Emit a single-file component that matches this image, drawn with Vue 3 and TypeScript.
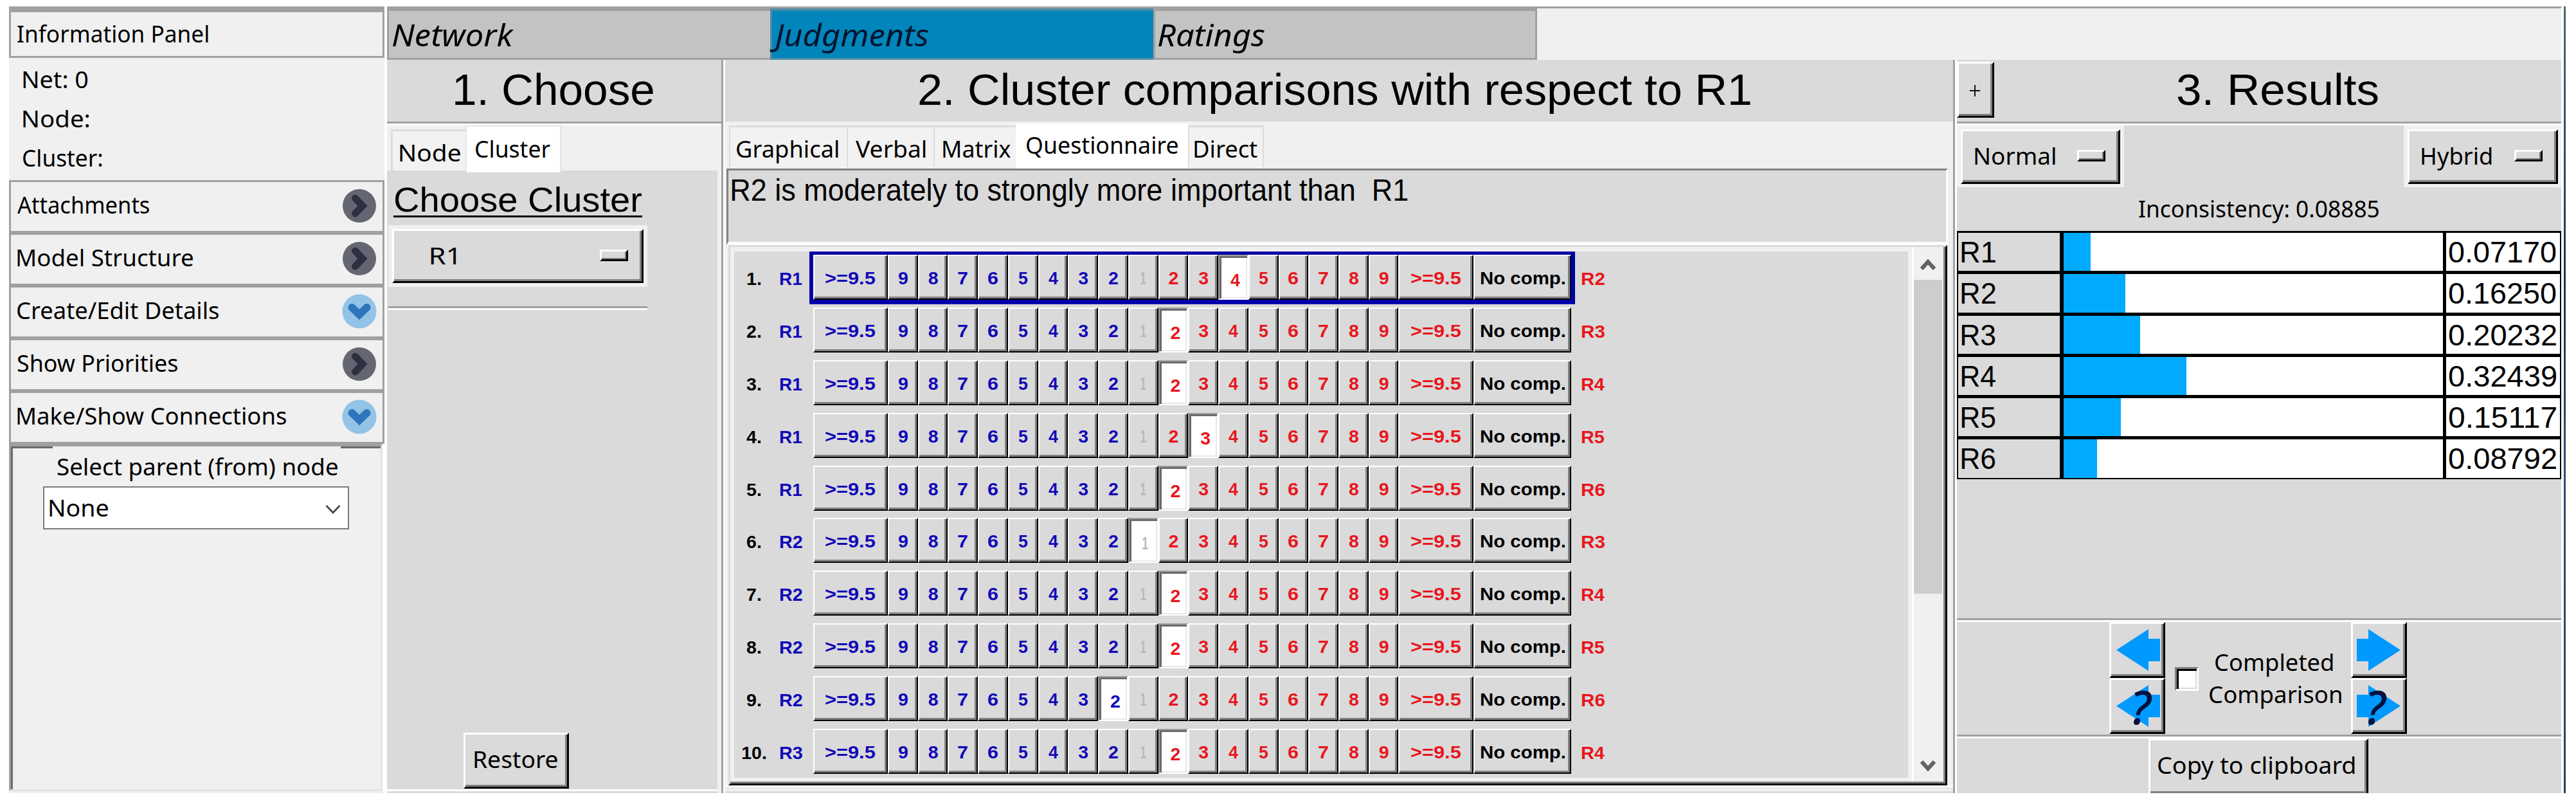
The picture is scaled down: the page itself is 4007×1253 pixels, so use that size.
<script setup lang="ts">
interface Fit extends HTMLElement {}

// Stretches a label horizontally so that its ink spans exactly the given width.
const vFit = {
  mounted(el: Fit, binding: { value: number }) {
    const cs = getComputedStyle(el)
    const ctx = document.createElement('canvas').getContext('2d')
    if (!ctx) return
    ctx.font = `${cs.fontStyle} ${cs.fontWeight} ${cs.fontSize} ${cs.fontFamily}`
    const m = ctx.measureText(el.textContent || '')
    const left = -m.actualBoundingBoxLeft
    const ink = m.actualBoundingBoxRight - left
    const k = binding.value / ink
    el.style.transform = `translateX(${-(left * k)}px) scaleX(${k})`
    el.style.marginRight = `${binding.value - el.offsetWidth}px`
  },
}

const topTabs = [
  { label: 'Network', w: 190, pad: 5, on: false },
  { label: 'Judgments', w: 247, pad: -4, on: true },
  { label: 'Ratings', w: 166, pad: 4, on: false },
]

const drawers = [
  { label: 'Attachments', w: 205, open: false },
  { label: 'Model Structure', w: 273, open: false },
  { label: 'Create/Edit Details', w: 313, open: true },
  { label: 'Show Priorities', w: 249, open: false },
  { label: 'Make/Show Connections', w: 418, open: true },
]

const facts = [
  { label: 'Net: 0', w: 101 },
  { label: 'Node:', w: 103 },
  { label: 'Cluster:', w: 123 },
]

const modes = [
  { label: 'Graphical', w: 158, cell: 183, pad: 10, on: false },
  { label: 'Verbal', w: 109, cell: 135, pad: 12, on: false },
  { label: 'Matrix', w: 105, cell: 128, pad: 13, on: false },
  { label: 'Questionnaire', w: 235, cell: 268, pad: 15, on: true },
  { label: 'Direct', w: 98, cell: 118, pad: 8, on: false },
]

type Side = 'blue' | 'mid' | 'red' | 'none'
interface Cell { label: string; side: Side; w: number }

const scale: Cell[] = [
  { label: '>=9.5', side: 'blue', w: 78 },
  ...[9, 8, 7, 6, 5, 4, 3, 2].map((n): Cell => ({ label: String(n), side: 'blue', w: 15 })),
  { label: '1', side: 'mid', w: 9 },
  ...[2, 3, 4, 5, 6, 7, 8, 9].map((n): Cell => ({ label: String(n), side: 'red', w: 15 })),
  { label: '>=9.5', side: 'red', w: 78 },
  { label: 'No comp.', side: 'none', w: 131 },
]

// pick: index into the scale of the pressed cell
const rows = [
  { a: 'R1', b: 'R2', pick: 12 },
  { a: 'R1', b: 'R3', pick: 10 },
  { a: 'R1', b: 'R4', pick: 10 },
  { a: 'R1', b: 'R5', pick: 11 },
  { a: 'R1', b: 'R6', pick: 10 },
  { a: 'R2', b: 'R3', pick: 9 },
  { a: 'R2', b: 'R4', pick: 10 },
  { a: 'R2', b: 'R5', pick: 10 },
  { a: 'R2', b: 'R6', pick: 8 },
  { a: 'R3', b: 'R4', pick: 10 },
]

const results = [
  { name: 'R1', value: '0.07170' },
  { name: 'R2', value: '0.16250' },
  { name: 'R3', value: '0.20232' },
  { name: 'R4', value: '0.32439' },
  { name: 'R5', value: '0.15117' },
  { name: 'R6', value: '0.08792' },
]
</script>

<template>
  <div class="page">
    <div class="app">
      <aside class="info">
        <div class="info-title"><span v-fit="297" class="t">Information Panel</span></div>
        <div class="facts">
          <div v-for="f in facts" :key="f.label" class="fact"><span v-fit="f.w" class="t">{{ f.label }}</span></div>
        </div>
        <div v-for="d in drawers" :key="d.label" class="drawer">
          <span v-fit="d.w" class="t">{{ d.label }}</span>
          <svg v-if="d.open" class="knob" viewBox="0 0 54 54">
            <circle cx="27" cy="27" r="26.5" fill="#93c3e6" />
            <path d="M15.500 21 L27 32 L38.500 21" fill="none" stroke="#2d75bd" stroke-width="12" stroke-linecap="round" stroke-linejoin="miter" />
          </svg>
          <svg v-else class="knob" viewBox="0 0 54 54">
            <circle cx="27" cy="27" r="26" fill="#646772" />
            <path d="M20.500 15 L32 27 L20.500 39" fill="none" stroke="#2e2f40" stroke-width="11" stroke-linecap="round" stroke-linejoin="miter" />
          </svg>
        </div>
        <div class="connect">
          <div class="legend"><span v-fit="436" class="t">Select parent (from) node</span></div>
          <div class="combo">
            <span v-fit="91" class="t">None</span>
            <svg class="combo-arrow" viewBox="0 0 24 16"><path d="M1.500 2 L12 13 L22.500 2" fill="none" stroke="#444" stroke-width="2.600" /></svg>
          </div>
        </div>
      </aside>

      <main class="main">
        <nav class="bar">
          <div v-for="t in topTabs" :key="t.label" class="top-tab" :class="{ on: t.on }">
            <span v-fit="t.w" class="t" :style="{ marginLeft: t.pad + 'px' }">{{ t.label }}</span>
          </div>
        </nav>

        <div class="sections">
          <section class="choose">
            <h2 class="ruled"><span v-fit="308" class="t">1. Choose</span></h2>
            <div class="choose-tabs">
              <div class="ctab"><span v-fit="94" class="t">Node</span></div>
              <div class="ctab on"><span v-fit="116" class="t">Cluster</span></div>
            </div>
            <div class="choose-body">
              <div class="choose-label"><span v-fit="385" class="t">Choose Cluster</span></div>
              <div class="option-wrap choose-option">
                <div class="option raised"><span v-fit="39" class="t">R1</span><i class="mark"></i></div>
              </div>
              <div class="rule short"></div>
              <div class="restore raised"><span v-fit="129" class="t">Restore</span></div>
            </div>
          </section>

          <div class="split"></div>

          <section class="compare">
            <h2><span v-fit="1293" class="t">2. Cluster comparisons with respect to R1</span></h2>
            <div class="modes">
              <div v-for="m in modes" :key="m.label" class="mode" :class="{ on: m.on }" :style="{ width: m.cell + 'px', paddingLeft: m.pad + 'px' }">
                <span v-fit="m.w" class="t">{{ m.label }}</span>
              </div>
            </div>
            <div class="message"><span v-fit="1052" class="t">R2 is moderately to strongly more important than&nbsp; R1</span></div>
            <div class="sheet">
              <div class="sheet-body">
                <div v-for="(r, i) in rows" :key="i" class="row" :class="{ active: i === 0 }">
                  <div class="num">{{ i + 1 }}.</div>
                  <div class="side blue"><span v-fit="35" class="t">{{ r.a }}</span></div>
                  <div class="cells">
                    <div v-for="(c, j) in scale" :key="j" class="cell" :class="[c.side, { picked: j === r.pick }]">
                      <span v-fit="c.w" class="t">{{ c.label }}</span>
                    </div>
                  </div>
                  <div class="side right red"><span v-fit="36" class="t">{{ r.b }}</span></div>
                </div>
              </div>
              <div class="scroll">
                <svg class="arrow" viewBox="0 0 24 20"><path d="M2 17 L12 6 L22 17" fill="none" stroke="#606060" stroke-width="6" /></svg>
                <div class="thumb"></div>
                <svg class="arrow end" viewBox="0 0 24 20"><path d="M2 3 L12 14 L22 3" fill="none" stroke="#606060" stroke-width="6" /></svg>
              </div>
            </div>
            <div class="foot"></div>
          </section>

          <div class="split"></div>

          <section class="results">
            <div class="results-head">
              <div class="plus raised">
                <svg viewBox="0 0 20 20"><path d="M10 0 V20 M1 10 H19" fill="none" stroke="#111" stroke-width="2.200" /></svg>
              </div>
              <h2><span v-fit="312" class="t">3. Results</span></h2>
            </div>
            <div class="options">
              <div class="option-wrap normal">
                <div class="option raised"><span v-fit="125" class="t">Normal</span><i class="mark"></i></div>
              </div>
              <div class="option-wrap hybrid">
                <div class="option raised"><span v-fit="109" class="t">Hybrid</span><i class="mark"></i></div>
              </div>
            </div>
            <div class="incons"><span v-fit="373" class="t">Inconsistency: 0.08885</span></div>
            <div class="table">
              <div v-for="r in results" :key="r.name" class="res">
                <div class="name"><span v-fit="53" class="t">{{ r.name }}</span></div>
                <div class="track"><div class="fill" :style="{ width: Number(r.value) * 100 + '%' }"></div></div>
                <div class="val"><span v-fit="167" class="t">{{ r.value }}</span></div>
              </div>
            </div>
            <div class="gap"></div>
            <div class="rule"></div>
            <div class="controls">
              <div class="pair">
                <div class="step raised">
                  <svg viewBox="0 0 68 66"><path d="M0 32.500 L50 0 V15 H68 V50 H50 V65 Z" fill="#0099ff" /></svg>
                </div>
                <div class="step raised">
                  <svg viewBox="0 0 68 66"><path d="M0 32.500 L50 0 V15 H68 V50 H50 V65 Z" fill="#0099ff" /></svg>
                  <span class="q">?</span>
                </div>
              </div>
              <div class="check"></div>
              <div class="done">
                <span v-fit="183" class="t">Completed</span>
                <span v-fit="205" class="t">Comparison</span>
              </div>
              <div class="pair fwd">
                <div class="step raised">
                  <svg viewBox="0 0 68 66"><path d="M68 32.500 L18 0 V15 H0 V50 H18 V65 Z" fill="#0099ff" /></svg>
                </div>
                <div class="step raised">
                  <svg viewBox="0 0 68 66"><path d="M68 32.500 L18 0 V15 H0 V50 H18 V65 Z" fill="#0099ff" /></svg>
                  <span class="q">?</span>
                </div>
              </div>
            </div>
            <div class="rule"></div>
            <div class="copy raised"><span v-fit="306" class="t">Copy to clipboard</span></div>
          </section>
        </div>
      </main>
      <div class="desktop-edge"></div>
    </div>
  </div>
</template>

<style>
body { background: #fff; margin: 0; }
</style>

<style scoped>
.page, .page * { box-sizing: border-box; }
.page {
  width: 4007px;
  height: 1253px;
  padding: 10px 0 0 14px;
  overflow: hidden;
  color: #000;
  font: 36.500px/50px "Noto Sans", "Open Sans", sans-serif;
}
.app { display: flex; height: 1223px; }
.t { display: inline-block; white-space: pre; transform-origin: 0 50%; }
.raised {
  border: 3px solid;
  border-color: #fff #000 #000 #fff;
  background: #dadada;
  box-shadow: inset -3px -3px 0 #808080;
}

/* information panel */
.info { width: 584px; margin-right: 4px; display: flex; flex-direction: column; background: #f0f0f0; }
.info-title { height: 80px; border: 3px solid #a0a0a0; border-top-width: 9px; padding: 8px 0 0 10px; }
.facts { height: 190px; padding: 8px 0 0 22px; }
.fact { height: 61px; }
.drawer {
  height: 82px;
  border: 3px solid #a0a0a0;
  display: flex;
  justify-content: space-between;
  padding: 10px 9px 0 10px;
}
.knob { width: 54px; height: 54px; }
.connect {
  width: 581px;
  flex: 1;
  border-left: 3px solid #a0a0a0;
  border-top: 4px solid #a0a0a0;
  border-bottom: 3px solid #e3e3e3;
  border-right: 3px solid #e3e3e3;
  margin-bottom: 3px;
  padding-left: 50px;
  box-shadow: inset 3px 0 0 #6b6b6b, 3px 0 0 #fff;
  background: linear-gradient(#6b6b6b, #6b6b6b) 0 0 / 65px 3px no-repeat, linear-gradient(#6b6b6b, #6b6b6b) 100% 0 / 62px 3px no-repeat, #f0f0f0;
}
.legend { height: 62px; padding: 6px 0 0 22px; }
.combo {
  width: 476px;
  height: 67px;
  border: 2.500px solid #7a7a7a;
  background: #fff;
  display: flex;
  justify-content: space-between;
  padding: 6px 11px 0 8px;
}
.combo-arrow { width: 24px; height: 16px; margin-top: 20px; }

/* top bar */
.main { width: 3382px; }
.bar { height: 83px; border-top: 3px solid #a0a0a0; background: #f0f0f0; display: flex; }
.top-tab {
  width: 596px;
  border: 3px solid #a0a0a0;
  border-top-width: 4px;
  border-right-width: 0;
  background: #c3c3c3;
  font-style: italic;
  font-size: 48px;
  line-height: 60px;
  padding-top: 7px;
}
.top-tab:last-child { width: 597px; border-right-width: 3px; }
.top-tab.on { background: #0285ba; border-color: #4b8ba6; color: #03142c; }
.sections { display: flex; height: 1140px; }
.split { width: 6px; background: linear-gradient(90deg, #a0a0a0 50%, #fff 50%); }
h2 {
  margin: 0;
  height: 96px;
  padding-top: 6px;
  background: #dadada;
  font: 68px/80px "Liberation Sans", Arial, sans-serif;
  text-align: center;
}
.rule { height: 6px; flex: none; background: linear-gradient(#a0a0a0 50%, #fff 50%); }

/* 1. choose */
.choose { width: 520px; background: #f0f0f0; display: flex; flex-direction: column; }
.ruled { height: 102px; flex: none; background: linear-gradient(#dadada 96px, #a0a0a0 96px, #a0a0a0 99px, #fff 99px); }
.choose-tabs { display: flex; align-items: flex-start; height: 70px; padding-left: 6px; }
.ctab { width: 116px; height: 64px; margin-top: 6px; border: 3px solid #dcdcdc; border-width: 3px 0 0 3px; padding: 8px 0 0 11px; background: #f2f2f2; }
.ctab.on { position: relative; width: 149px; height: 73px; margin-top: 0; background: #fff; border: 2px solid #e4e4e4; border-bottom: 0; padding: 9px 0 0 14px; }
.choose-body {
  width: 514px;
  height: 968px;
  background: #dadada;
  display: flex;
  flex-direction: column;
  align-items: flex-start;
  border-bottom: 3px solid #dadada;
  box-shadow: inset 0 -3px 0 #fff;
}
.choose-label {
  height: 85px;
  padding: 15px 0 0 12px;
  font: 54px/60px "Liberation Sans", Arial, sans-serif;
}
.choose-label .t { text-decoration: underline; text-decoration-thickness: 3px; text-underline-offset: 6px; text-decoration-skip-ink: none; }
.option-wrap { background: #f0f0f0; height: 96px; padding: 6px; }
.option { height: 85px; display: flex; justify-content: space-between; align-items: flex-start; padding-top: 13px; }
.choose-option { margin-left: 2px; width: 403px; }
.choose-option .option { height: 84px; padding: 13px 21px 0 57px; }
.mark {
  width: 44px;
  height: 18px;
  margin-top: 16px;
  border: 3px solid;
  border-color: #fff #000 #000 #fff;
  box-shadow: inset -2px -2px 0 #808080;
}
.rule.short { width: 403px; margin: 30px 0 0 2px; }
.restore { width: 164px; height: 87px; margin: auto 0 4px 119px; padding: 13px 0 0 14px; }

/* 2. comparisons */
.compare { width: 1910px; background: #f0f0f0; }
.compare h2 { padding-right: 13px; }
.modes { height: 73px; display: flex; align-items: flex-start; padding-left: 6px; }
.mode { height: 65px; margin-top: 6px; border: 2px solid #dcdcdc; border-width: 3px 0 0 2px; padding-top: 8px; background: #f2f2f2; }
.mode.on { position: relative; margin-top: 3px; height: 70px; background: #fff; border-color: #fff; padding-top: 5px; }
.mode:last-child { border-right-width: 2px; }
.message {
  width: 1900px;
  height: 119px;
  margin-left: 2px;
  border: 3px solid #808080;
  border-right-color: #fff;
  border-bottom: 5px solid #fff;
  background: #dadada;
  padding: 3px 0 0 5px;
  font: 47.500px/56px "Liberation Sans", Arial, sans-serif;
}
.sheet {
  width: 1896px;
  height: 840px;
  margin-left: 5px;
  border: 3px solid;
  border-color: #dadada #000 #000 #dadada;
  box-shadow: inset -3px -3px 0 #808080;
  display: flex;
  background: #f0f0f0;
}
.sheet-body {
  width: 1826px;
  height: 818px;
  margin: 7px 0 0 6px;
  background: #dadada;
  font: bold 28.500px/40px "Liberation Sans", Arial, sans-serif;
  flex: none;
}
.row { display: flex; height: 81.900px; }
.num { width: 62px; padding-top: 22px; text-align: center; }
.side { width: 55px; padding: 22px 0 0 9px; }
.side.right { padding-left: 10px; }
.blue { color: #1108b8; }
.red { color: #e8161c; }
.mid { color: #b9b9b9; }
.none { color: #000; }
.cells {
  display: grid;
  grid-template-columns: 116px repeat(17, 46.740px) 116.500px 152.500px;
  height: 82px;
  border: 6px solid transparent;
  border-width: 5px 6px 7px;
}
.active .cells { border-color: #0000a8; background: #0000a8; }
.cell {
  height: 70px;
  border: 2.600px solid;
  border-color: #fff #000 #000 #fff;
  background: #dadada;
  box-shadow: inset -3px -3px 0 #808080;
  display: flex;
  justify-content: center;
  padding-top: 14px;
}
.cell.picked {
  background: #fff;
  border-color: #a0a0a0 #fff #fff #a0a0a0;
  box-shadow: inset 3px 3px 0 #6b6b6b, inset -2px -2px 0 #e8e8e8;
  padding: 17px 0 0 6px;
}
.scroll { width: 47px; margin-left: 6px; border-left: 3px solid #fff; display: flex; flex-direction: column; align-items: center; height: 831px; }
.arrow { width: 24px; height: 20px; margin: 17px 0 14px; flex: none; }
.arrow.end { margin: auto 0 14px; }
.thumb { width: 44px; height: 488px; background: #cdcdcd; }
.foot { height: 12px; background: linear-gradient(#fff 3px, #e3e3e3 3px, #e3e3e3 5px, #f0f0f0 5px, #f0f0f0 9px, #dadada 9px); }

/* 3. results */
.results { width: 940px; background: #dadada; display: flex; flex-direction: column; }
.results-head { display: flex; height: 102px; flex: none; background: linear-gradient(#dadada 96px, #a0a0a0 96px, #a0a0a0 99px, #fff 99px); }
.results-head h2 { flex: 1; padding-right: 58px; background: none; padding-left: 58px; }
.plus { width: 58px; height: 87px; margin-top: 3px; padding: 32px 0 0 16px; }
.plus svg { display: block; width: 18px; height: 20px; }
.options { display: flex; justify-content: space-between; }
.normal { width: 260px; }
.hybrid { width: 245px; padding-right: 5px; }
.normal .option { padding: 13px 20px 0 19px; }
.hybrid .option { padding: 13px 21px 0 19px; }
.incons { height: 68px; padding: 8px 0 0 283px; }
.table { display: flex; flex-direction: column; }
.res { display: flex; height: 64.300px; border: 2.700px solid #000; background: #000; border-top-width: 3px; font: 47px/56px "Liberation Sans", Arial, sans-serif; }
.name { width: 158px; background: #dadada; padding: 2px 0 0 5px; }
.track { width: 590px; margin: 0 5px 0 6px; background: #fff; }
.fill { height: 100%; background: #00aaff; }
.val { flex: 1; background: #fff; padding: 2px 0 0 4px; }
.gap { flex: 1; }
.controls { display: flex; height: 175px; padding-left: 237px; flex: none; }
.pair { width: 87px; }
.step { position: relative; height: 87px; padding: 8px 0 0 8px; }
.step svg { display: block; width: 68px; height: 66px; }
.fwd .step { padding-left: 6px; }
.q {
  position: absolute;
  left: 30px;
  top: 5px;
  color: #06113f;
  font: italic 72px/72px "Noto Sans", sans-serif;
  -webkit-text-stroke: 1px #06113f;
}
.fwd .q { left: 19px; }
.check {
  width: 37px;
  height: 37px;
  margin: 70px 0 0 15px;
  border: 3px solid;
  border-color: #808080 #fff #fff #808080;
  background: #fff;
  box-shadow: inset 3px 3px 0 #000, inset -2px -2px 0 #dadada;
}
.done { width: 205px; margin: 37px 15px 0 17px; display: flex; flex-direction: column; align-items: center; }
.done .t { flex: none; align-self: flex-start; }
.done .t:first-child { margin-left: 9px; }
.copy { width: 342px; height: 85px; flex: none; margin-left: 298px; border-bottom: 0; padding: 13px 0 0 12px; }
.desktop-edge { width: 3px; margin-left: 4px; background: linear-gradient(#4f6a72, #1e3550 35%, #33506d 60%, #2c425c); }
</style>
